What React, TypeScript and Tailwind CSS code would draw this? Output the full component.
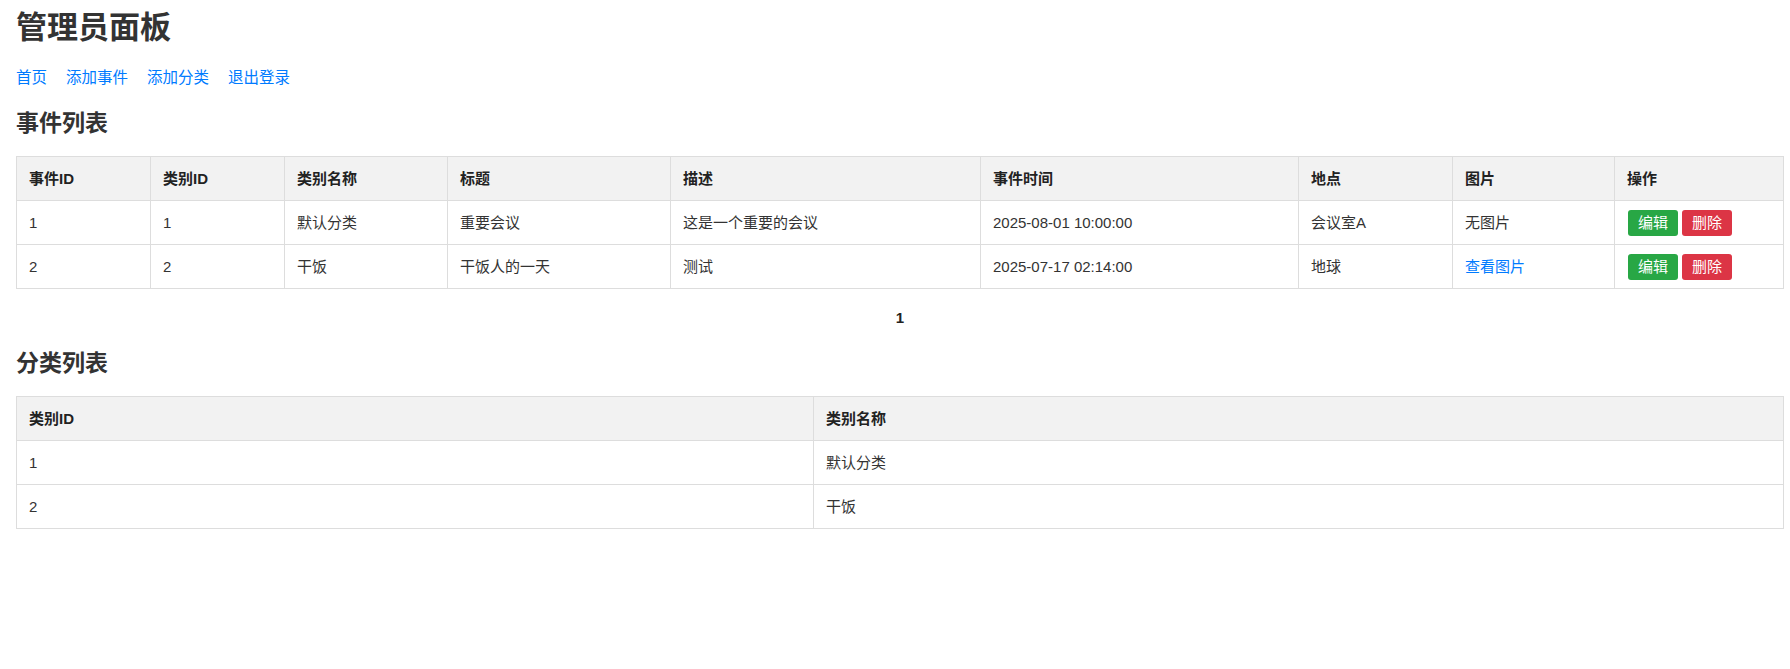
import React from 'react';

interface EventRow {
  id: number;
  categoryId: number;
  categoryName: string;
  title: string;
  description: string;
  time: string;
  location: string;
  hasImage: boolean;
}

const events: EventRow[] = [
  { id: 1, categoryId: 1, categoryName: '默认分类', title: '重要会议', description: '这是一个重要的会议', time: '2025-08-01 10:00:00', location: '会议室A', hasImage: false },
  { id: 2, categoryId: 2, categoryName: '干饭', title: '干饭人的一天', description: '测试', time: '2025-07-17 02:14:00', location: '地球', hasImage: true },
];

const categories = [
  { id: 1, name: '默认分类' },
  { id: 2, name: '干饭' },
];

const th = 'border border-[#ddd] bg-[#f2f2f2] px-3 py-[10px] text-left font-bold leading-[23px] text-[#222]';
const td = 'border border-[#ddd] px-3 py-[10px] leading-[23px]';

export default function App() {
  return (
    <div className="min-h-screen bg-white pl-4 pr-[6px] pt-[10px] font-['Liberation_Sans','Noto_Sans_CJK_SC',sans-serif] text-[#333]">
      <h1 className="text-[31px] font-bold leading-[36px]">管理员面板</h1>

      <nav className="mt-[22px] flex gap-[19px] text-[15.5px] leading-5 text-[#007bff]">
        <a href="#">首页</a>
        <a href="#">添加事件</a>
        <a href="#">添加分类</a>
        <a href="#">退出登录</a>
      </nav>

      <h2 className="mt-[20px] text-[23px] font-bold leading-[30px]">事件列表</h2>

      <table className="mt-[18px] w-full table-fixed border-collapse text-[15px]">
        <thead>
          <tr>
            <th className={`${th} w-[134px]`}>事件ID</th>
            <th className={`${th} w-[134px]`}>类别ID</th>
            <th className={`${th} w-[163px]`}>类别名称</th>
            <th className={`${th} w-[223px]`}>标题</th>
            <th className={`${th} w-[310px]`}>描述</th>
            <th className={`${th} w-[318px]`}>事件时间</th>
            <th className={`${th} w-[154px]`}>地点</th>
            <th className={`${th} w-[162px]`}>图片</th>
            <th className={th}>操作</th>
          </tr>
        </thead>
        <tbody>
          {events.map((e) => (
            <tr key={e.id}>
              <td className={td}>{e.id}</td>
              <td className={td}>{e.categoryId}</td>
              <td className={td}>{e.categoryName}</td>
              <td className={td}>{e.title}</td>
              <td className={td}>{e.description}</td>
              <td className={td}>{e.time}</td>
              <td className={td}>{e.location}</td>
              <td className={td}>
                {e.hasImage ? <a href="#" className="text-[#007bff]">查看图片</a> : '无图片'}
              </td>
              <td className="border border-[#ddd] py-2 pl-[13px] pr-3">
                <div className="flex gap-1">
                  <button className="h-[26px] rounded-[3px] bg-[#28a745] px-[10px] text-[15px] leading-[26px] text-white">编辑</button>
                  <button className="h-[26px] rounded-[3px] bg-[#dc3545] px-[10px] text-[15px] leading-[26px] text-white">删除</button>
                </div>
              </td>
            </tr>
          ))}
        </tbody>
      </table>

      {/* pagination */}
      <div className="mt-[19px] text-center text-[15px] font-bold leading-5 text-[#222]">1</div>

      <h2 className="mt-[20px] text-[23px] font-bold leading-[30px]">分类列表</h2>

      <table className="mt-[18px] w-full table-fixed border-collapse text-[15px]">
        <thead>
          <tr>
            <th className={`${th} w-[797px]`}>类别ID</th>
            <th className={th}>类别名称</th>
          </tr>
        </thead>
        <tbody>
          {categories.map((c) => (
            <tr key={c.id}>
              <td className={td}>{c.id}</td>
              <td className={td}>{c.name}</td>
            </tr>
          ))}
        </tbody>
      </table>
    </div>
  );
}
